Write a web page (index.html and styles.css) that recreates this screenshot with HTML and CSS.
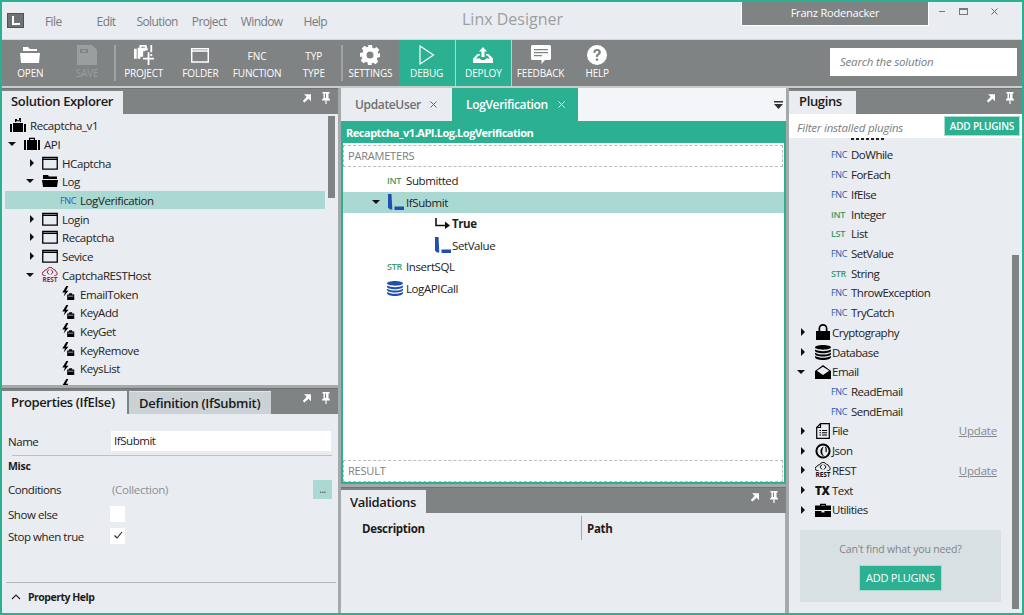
FILE: index.html
```html
<!DOCTYPE html>
<html lang="en">
<head>
<meta charset="utf-8">
<title>Linx Designer</title>
<link rel="stylesheet" href="styles.css">
</head>
<body>
<svg class="defs" width="0" height="0">
  <symbol id="i-popout" viewBox="0 0 10 10"><path d="M2 1.200h7v7L6.600 5.800 2.400 9.600.8 8l3.900-4.300z" fill="currentColor"/></symbol>
  <symbol id="i-pin" viewBox="0 0 10 12"><path d="M1.500 0h7v1.500H7.500v4.500l1.500 1.500v1H5.600V12H4.400V8.500H1v-1l1.500-1.500V1.500h-1zM4 1.500v4.500h1V1.500z" fill="currentColor"/></symbol>
  <symbol id="i-folder" viewBox="0 0 16 14"><path d="M.75 1.500h14.500v11.700H.75zM.75 3.400h14.500" fill="none" stroke="currentColor" stroke-width="1.300"/></symbol>
  <symbol id="i-folder-open" viewBox="0 0 16 14"><path d="M1 1h5l1 1.500h8V5H1zM0 6h16l-1 7H1z" fill="currentColor"/></symbol>
  <symbol id="i-case" viewBox="0 0 16 14"><path d="M5 3V.7h6V3h-1.200V1.900H6.200V3zM0 3h2v10H0zM3 3h10v10H3zM14 3h2v10h-2z" fill="currentColor"/></symbol>
  <symbol id="i-solution" viewBox="0 0 16 16"><path d="M5 5V3.200h6V5h-1.200V4.200H6.200V5zM0 7h2v8H0zM3 6h10v9H3zM14 7h2v8h-2z" fill="currentColor"/><path d="M5 2h2v2H5zM9 1h2v2H9z" fill="currentColor"/></symbol>
  <symbol id="i-event" viewBox="0 0 14 17"><path d="M4.500 0 0 7.500h3L1.500 12 7 5.500H4.200L6.800 0z" fill="currentColor"/><path d="M5.500 9.500h1.800l.6-1.300h3l.6 1.300h2v6.500h-8z" fill="currentColor"/><path d="M6.500 11.500h6" stroke="#e9ecf1" stroke-width=".8"/></symbol>
  <symbol id="i-if" viewBox="0 0 16 16"><path d="M0 0h3.500l.8 15.500H2L0 13.500z" fill="#1f4fb0"/><path d="M6.500 12.500H16V16H6.500z" fill="#1f4fb0"/></symbol>
  <symbol id="i-arrow" viewBox="0 0 15 12"><path d="M1 0v7.500h11" fill="none" stroke="currentColor" stroke-width="1.600"/><path d="M10 3.500 15 7.500 10 11z" fill="currentColor"/></symbol>
  <symbol id="i-db" viewBox="0 0 16 15"><path d="M0 2.300C0 1 3.500 0 8 0s8 1 8 2.300-3.500 2.400-8 2.400S0 3.600 0 2.300zM0 5.500v-.9c2 1.400 5 1.600 8 1.600s6-.2 8-1.600v.9c0 1.900-3.500 2.700-8 2.700S0 7.400 0 5.500zM0 8.800v-1c2 1.400 5 1.700 8 1.700s6-.3 8-1.700v1c0 1.900-3.500 2.700-8 2.700S0 10.700 0 8.800zM0 12v-1c2 1.400 5 1.700 8 1.700s6-.3 8-1.700v1c0 2-3.500 3-8 3s-8-1-8-3z" fill="currentColor"/></symbol>
  <symbol id="i-lock" viewBox="0 0 14 16"><path d="M0 7h14v9H0zM2.500 7V4.500a4.500 4.500 0 0 1 9 0V7H9.800V4.500a2.800 2.800 0 0 0-5.600 0V7z" fill="currentColor"/></symbol>
  <symbol id="i-mail" viewBox="0 0 16 14"><path d="M0 6 8 0l8 6v8H0zM1.800 5.800 8 10l6.200-4.200L8 1.800z" fill="currentColor"/></symbol>
  <symbol id="i-file" viewBox="0 0 14 16"><path d="M4.500.7h8.800v14.600H.7V4.500z M4.500.7v3.800H.7" fill="none" stroke="currentColor" stroke-width="1.200"/><path d="M3.500 7.500h1.500M6 7.500h5M3.500 9.800h1.500M6 9.800h5M3.500 12h1.500M6 12h5" stroke="currentColor" stroke-width="1.100"/></symbol>
  <symbol id="i-json" viewBox="0 0 16 16"><circle cx="8" cy="8" r="6.600" fill="none" stroke="currentColor" stroke-width="2"/><path d="M9 3.500C6 4.500 5 7 5.500 9.500s2.500 3.800 3.500 3.500C7.500 11.500 7 9.500 7.300 7.500 7.600 5.800 8 4.500 9 3.500z" fill="currentColor"/><path d="M10.500 4c1 1.500 1 3.500.5 5" stroke="currentColor" fill="none" stroke-width="1.200"/></symbol>
  <symbol id="i-tool" viewBox="0 0 16 14"><path d="M5 2.500V.8h6v1.700H9.800V2H6.200v.5zM0 2.500h16v4.500H0zM0 8h6.500v1.500h3V8H16v6H0z" fill="currentColor"/></symbol>
  <symbol id="i-cloud" viewBox="0 0 16 9"><path d="M3.500 8.500H2.400a2 2 0 0 1-.3-4 2.300 2.300 0 0 1 2.600-1.700A3.700 3.700 0 0 1 11.400 2.300a2.600 2.600 0 0 1 2.400 2.300 2 2 0 0 1-.4 3.900h-1" fill="none" stroke="currentColor" stroke-width="1"/><path d="M7 2.500 5 5l2 2.500M9 2.500 11 5 9 7.500" fill="none" stroke="currentColor" stroke-width="1"/></symbol>
  <symbol id="i-open-lg" viewBox="0 0 20 16"><path d="M3 0h5l2 2h7v2H3zM0 6h20l-1 10H1z" fill="currentColor"/></symbol>
  <symbol id="i-save-lg" viewBox="0 0 20 20"><path d="M0 0h15l5 5v15H0z" fill="currentColor"/><path d="M3 4h8v4H3z" fill="#7f8383"/><path d="M5 5h4v2H5z" fill="currentColor"/></symbol>
  <symbol id="i-project-lg" viewBox="0 0 22 22"><path d="M0 4h3v11H0zM4 3h2V0h8v3h1v3h-3V2H8v1h4v4h-2v6h-3v2H4zM18 0h2v8h-2zM18 10h2v2h-2z" fill="currentColor"/><path d="M15 8h2v6h5v2h-5v6h-2v-6h-5v-2h5z" fill="currentColor"/></symbol>
  <symbol id="i-gear" viewBox="0 0 20 20"><path fill="currentColor" fill-rule="evenodd" d="M8 0h4l.5 2.700 1.700.7 2.300-1.500 2.800 2.800-1.600 2.300.7 1.700L20 8v4l-2.600.5-.7 1.700 1.600 2.300-2.800 2.800-2.300-1.600-1.700.7L11.900 20H8l-.5-2.600-1.700-.7-2.300 1.600-2.800-2.800 1.600-2.300-.7-1.700L0 12V8l2.600-.5.700-1.700L1.700 3.500l2.800-2.800 2.300 1.600 1.700-.7zM10 6.500a3.500 3.500 0 1 0 0 7 3.500 3.500 0 0 0 0-7z"/></symbol>
  <symbol id="i-play" viewBox="0 0 16 20"><path d="M1 1l13.500 9L1 19z" fill="none" stroke="currentColor" stroke-width="1.200"/></symbol>
  <symbol id="i-deploy" viewBox="0 0 20 16"><path d="M10 0l4 4.500h-2.500V10h-3V4.500H6z" fill="currentColor"/><path d="M4.500 7H7v1.500H5.500L3 11.500h4L8 13h4l1-1.500h4L14.500 8.500H13V7h2.500L20 11.500V16H0v-4.500z" fill="currentColor"/></symbol>
  <symbol id="i-chat" viewBox="0 0 20 20"><path fill="currentColor" fill-rule="evenodd" d="M1.500 0h17A1.500 1.500 0 0 1 20 1.500v12a1.500 1.500 0 0 1-1.500 1.500H14l-3.500 4V15H1.500A1.500 1.500 0 0 1 0 13.500v-12A1.500 1.500 0 0 1 1.500 0zM3 4v1.200h14V4zM3 7v1.200h14V7zM3 10v1.200h8V10z"/></symbol>
  <symbol id="i-help" viewBox="0 0 20 20"><path fill="currentColor" fill-rule="evenodd" d="M10 0a10 10 0 1 1 0 20 10 10 0 0 1 0-20zM6.300 7.700h2.300c0-1 .5-1.600 1.400-1.600s1.400.5 1.400 1.200c0 .8-.5 1.200-1.300 1.800-1 .7-1.300 1.500-1.300 3h2.200c0-1 .2-1.300 1.100-2 1-.8 1.700-1.600 1.700-2.900 0-2-1.500-3.200-3.800-3.200-2.400 0-3.700 1.400-3.700 3.700zM8.800 13.400v2.400h2.400v-2.400z"/></symbol>
</svg>

<div class="app">
  <header class="titlebar">
    <div class="logo"><span class="logo-l"></span></div>
    <nav class="menu">
      <span class="m-file">File</span><span class="m-edit">Edit</span><span class="m-solution">Solution</span><span class="m-project">Project</span><span class="m-window">Window</span><span class="m-help">Help</span>
    </nav>
    <div class="app-title">Linx Designer</div>
    <div class="user">Franz Rodenacker</div>
    <div class="winctl">
      <span class="wc-min"></span><span class="wc-max"></span>
      <svg class="wc-close" width="7" height="7" viewBox="0 0 7 7"><path d="M.5.500l6 6M6.500.500l-6 6" stroke="#666" stroke-width="1"/></svg>
    </div>
  </header>

  <div class="toolbar">
    <button class="tb"><svg class="tb-ic tb-ic-open" width="20" height="16"><use href="#i-open-lg"/></svg><span>OPEN</span></button>
    <button class="tb tb-off tb-sep"><svg class="tb-ic" width="20" height="20"><use href="#i-save-lg"/></svg><span>SAVE</span></button>
    <button class="tb"><svg class="tb-ic" width="20" height="20"><use href="#i-project-lg"/></svg><span>PROJECT</span></button>
    <button class="tb"><svg class="tb-ic tb-ic-open" width="20" height="16"><use href="#i-folder"/></svg><span>FOLDER</span></button>
    <button class="tb"><b class="tb-code">FNC</b><span>FUNCTION</span></button>
    <button class="tb tb-sep"><b class="tb-code">TYP</b><span>TYPE</span></button>
    <button class="tb"><svg class="tb-ic" width="20" height="20"><use href="#i-gear"/></svg><span>SETTINGS</span></button>
    <button class="tb tb-on"><svg class="tb-ic" width="16" height="20"><use href="#i-play"/></svg><span>DEBUG</span></button>
    <button class="tb tb-on"><svg class="tb-ic tb-ic-open" width="20" height="16"><use href="#i-deploy"/></svg><span>DEPLOY</span></button>
    <button class="tb"><svg class="tb-ic" width="20" height="20"><use href="#i-chat"/></svg><span>FEEDBACK</span></button>
    <button class="tb"><svg class="tb-ic" width="20" height="20"><use href="#i-help"/></svg><span>HELP</span></button>
    <div class="search">Search the solution</div>
  </div>

  <main class="workspace">
    <section class="col col-left">
      <div class="panel panel-explorer">
        <div class="tabbar">
          <div class="ptab ptab-explorer">Solution Explorer</div>
          <div class="tabtools"><svg width="10" height="10"><use href="#i-popout"/></svg><svg width="10" height="12"><use href="#i-pin"/></svg></div>
        </div>
        <div class="tree-wrap">
          <div class="tree">
            <div class="row d0"><svg class="ic" width="16" height="16"><use href="#i-solution"/></svg><span>Recaptcha_v1</span></div>
            <div class="row d1"><i class="tw tw-down"></i><svg class="ic" width="16" height="14"><use href="#i-case"/></svg><span>API</span></div>
            <div class="row d2"><i class="tw tw-right"></i><svg class="ic" width="16" height="14"><use href="#i-folder"/></svg><span>HCaptcha</span></div>
            <div class="row d2"><i class="tw tw-down"></i><svg class="ic" width="16" height="14"><use href="#i-folder-open"/></svg><span>Log</span></div>
            <div class="row row-sel d3"><b class="tag tag-fnc">FNC</b><span>LogVerification</span></div>
            <div class="row d2"><i class="tw tw-right"></i><svg class="ic" width="16" height="14"><use href="#i-folder"/></svg><span>Login</span></div>
            <div class="row d2"><i class="tw tw-right"></i><svg class="ic" width="16" height="14"><use href="#i-folder"/></svg><span>Recaptcha</span></div>
            <div class="row d2"><i class="tw tw-right"></i><svg class="ic" width="16" height="14"><use href="#i-folder"/></svg><span>Sevice</span></div>
            <div class="row d2"><i class="tw tw-down"></i><span class="rest rest-red"><svg width="16" height="9"><use href="#i-cloud"/></svg><b>REST</b></span><span>CaptchaRESTHost</span></div>
            <div class="row d3e"><svg class="ic ic-ev" width="13" height="15"><use href="#i-event"/></svg><span>EmailToken</span></div>
            <div class="row d3e"><svg class="ic ic-ev" width="13" height="15"><use href="#i-event"/></svg><span>KeyAdd</span></div>
            <div class="row d3e"><svg class="ic ic-ev" width="13" height="15"><use href="#i-event"/></svg><span>KeyGet</span></div>
            <div class="row d3e"><svg class="ic ic-ev" width="13" height="15"><use href="#i-event"/></svg><span>KeyRemove</span></div>
            <div class="row d3e"><svg class="ic ic-ev" width="13" height="15"><use href="#i-event"/></svg><span>KeysList</span></div>
            <div class="row d3e"><svg class="ic ic-ev" width="13" height="15"><use href="#i-event"/></svg></div>
          </div>
          <div class="scroll scroll-left"><div class="thumb"></div></div>
        </div>
      </div>
      <div class="panel panel-props">
        <div class="tabbar">
          <div class="ptab ptab-props">Properties (IfElse)</div>
          <div class="ptab ptab-def">Definition (IfSubmit)</div>
          <div class="tabtools"><svg width="10" height="10"><use href="#i-popout"/></svg><svg width="10" height="12"><use href="#i-pin"/></svg></div>
        </div>
        <div class="props">
          <div class="prop prop-name"><label>Name</label><div class="field">IfSubmit</div></div>
          <div class="misc">Misc</div>
          <div class="prop prop-cond"><label>Conditions</label><div class="coll">(Collection)</div><div class="dots">...</div></div>
          <div class="prop prop-else"><label>Show else</label><div class="check"></div></div>
          <div class="prop prop-stop"><label>Stop when true</label><div class="check"><svg width="10" height="9" viewBox="0 0 10 9"><path d="M1.500 4.500l2.500 2.500 5-6" fill="none" stroke="#222" stroke-width="1.100"/></svg></div></div>
          <div class="prop-help"><svg width="10" height="6" viewBox="0 0 10 6"><path d="M1 5l4-4 4 4" fill="none" stroke="#222" stroke-width="1.100"/></svg><b>Property Help</b></div>
        </div>
      </div>
    </section>

    <section class="col col-center">
      <div class="doctabs">
        <div class="dtab dtab-idle">UpdateUser<svg width="7" height="7" viewBox="0 0 7 7"><path d="M.5.500l6 6M6.500.500l-6 6" stroke="#666" stroke-width="1"/></svg></div>
        <div class="dtab dtab-on">LogVerification<svg width="7" height="7" viewBox="0 0 7 7"><path d="M.5.500l6 6M6.500.500l-6 6" stroke="#fff" stroke-width="1"/></svg></div>
        <div class="dmenu"><svg width="9" height="8" viewBox="0 0 9 8"><path d="M0 0h9v1.500H0zM0 3h9L4.500 8z" fill="#333"/></svg></div>
      </div>
      <div class="editor">
        <div class="crumb">Recaptcha_v1.API.Log.LogVerification</div>
        <div class="canvas">
          <div class="dash">PARAMETERS</div>
          <div class="steps">
            <div class="step s1"><b class="tag tag-var">INT</b><span>Submitted</span></div>
            <div class="step step-sel"><i class="tw tw-down"></i><svg class="sic" width="16" height="16"><use href="#i-if"/></svg><span>IfSubmit</span></div>
            <div class="step s2"><svg class="sic" width="15" height="12"><use href="#i-arrow"/></svg><b class="strong">True</b></div>
            <div class="step s2"><svg class="sic" width="16" height="16"><use href="#i-if"/></svg><span>SetValue</span></div>
            <div class="step s1"><b class="tag tag-var">STR</b><span>InsertSQL</span></div>
            <div class="step s1"><svg class="sic sic-db" width="16" height="15"><use href="#i-db"/></svg><span>LogAPICall</span></div>
          </div>
          <div class="dash">RESULT</div>
        </div>
      </div>
      <div class="panel panel-valid">
        <div class="tabbar">
          <div class="ptab ptab-valid">Validations</div>
          <div class="tabtools"><svg width="10" height="10"><use href="#i-popout"/></svg><svg width="10" height="12"><use href="#i-pin"/></svg></div>
        </div>
        <div class="vtable">
          <div class="vh vh-desc">Description</div>
          <div class="vh vh-path">Path</div>
        </div>
      </div>
    </section>

    <section class="col col-right">
      <div class="panel panel-plugins">
        <div class="tabbar">
          <div class="ptab ptab-plugins">Plugins</div>
          <div class="tabtools"><svg width="10" height="10"><use href="#i-popout"/></svg><svg width="10" height="12"><use href="#i-pin"/></svg></div>
        </div>
        <div class="filter"><span class="filter-text">Filter installed plugins</span><div class="add add-top">ADD PLUGINS</div></div>
        <div class="plist-wrap">
          <div class="plist">
            <div class="peek"></div>
            <div class="pr pr-sub"><b class="tag tag-fnc">FNC</b><span>DoWhile</span></div>
            <div class="pr pr-sub"><b class="tag tag-fnc">FNC</b><span>ForEach</span></div>
            <div class="pr pr-sub"><b class="tag tag-fnc">FNC</b><span>IfElse</span></div>
            <div class="pr pr-sub"><b class="tag tag-var">INT</b><span>Integer</span></div>
            <div class="pr pr-sub"><b class="tag tag-var">LST</b><span>List</span></div>
            <div class="pr pr-sub"><b class="tag tag-fnc">FNC</b><span>SetValue</span></div>
            <div class="pr pr-sub"><b class="tag tag-var">STR</b><span>String</span></div>
            <div class="pr pr-sub"><b class="tag tag-fnc">FNC</b><span>ThrowException</span></div>
            <div class="pr pr-sub"><b class="tag tag-fnc">FNC</b><span>TryCatch</span></div>
            <div class="pr"><i class="tw tw-right"></i><svg class="pic" width="16" height="16"><use href="#i-lock"/></svg><span>Cryptography</span></div>
            <div class="pr"><i class="tw tw-right"></i><svg class="pic" width="16" height="15"><use href="#i-db"/></svg><span>Database</span></div>
            <div class="pr"><i class="tw tw-down"></i><svg class="pic" width="16" height="14"><use href="#i-mail"/></svg><span>Email</span></div>
            <div class="pr pr-sub"><b class="tag tag-fnc">FNC</b><span>ReadEmail</span></div>
            <div class="pr pr-sub"><b class="tag tag-fnc">FNC</b><span>SendEmail</span></div>
            <div class="pr"><i class="tw tw-right"></i><svg class="pic" width="16" height="16"><use href="#i-file"/></svg><span>File</span><a class="update">Update</a></div>
            <div class="pr"><i class="tw tw-right"></i><svg class="pic" width="16" height="16"><use href="#i-json"/></svg><span>Json</span></div>
            <div class="pr"><i class="tw tw-right"></i><span class="rest rest-blk"><svg width="16" height="9"><use href="#i-cloud"/></svg><b>REST</b></span><span>REST</span><a class="update">Update</a></div>
            <div class="pr"><i class="tw tw-right"></i><b class="tx">TX</b><span>Text</span></div>
            <div class="pr"><i class="tw tw-right"></i><svg class="pic" width="16" height="14"><use href="#i-tool"/></svg><span>Utilities</span></div>
            <div class="cta">
              <div class="cta-text">Can't find what you need?</div>
              <div class="add add-big">ADD PLUGINS</div>
            </div>
          </div>
          <div class="scroll scroll-right"><div class="thumb"></div></div>
        </div>
      </div>
    </section>
  </main>
</div>
</body>
</html>
```

FILE: styles.css
```css
* { box-sizing: border-box; }
html, body { margin: 0; padding: 0; }
body { width: 1024px; height: 615px; overflow: hidden; font-family: "Open Sans", "Noto Sans", sans-serif; font-size: 12px; color: #1c1c1c; }
.defs { position: absolute; }

.app { width: 1024px; height: 615px; border: 2px solid #2cb092; background: #a5a9aa; display: flex; flex-direction: column; overflow: hidden; }

/* title bar */
.titlebar { height: 37px; flex: none; background: #e9ecf1; display: flex; align-items: flex-start; }
.logo { width: 17px; height: 15px; margin: 11px 0 0 5px; background: #6e7272; border: 1px solid #4f5353; flex: none; padding: 2px 0 0 4px; }
.logo-l { display: block; width: 8px; height: 9px; border-left: 2px solid #fff; border-bottom: 2px solid #fff; }
.menu { width: 318px; flex: none; height: 37px; display: flex; color: #787b7d; font-size: 12px; letter-spacing: -.6px; padding-top: 11px; }
.menu span { flex: none; }
.m-file { margin-left: 21px; }
.m-edit { margin-left: 35px; }
.m-solution { margin-left: 21px; }
.m-project { margin-left: 14px; }
.m-window { margin-left: 14px; }
.m-help { margin-left: 21px; }
.app-title { margin-left: 120px; width: 279px; padding-top: 6px; font-size: 16px; color: #9c9fa2; font-weight: 400; flex: none; }
.user { width: 188px; height: 24px; background: #7f8383; border: 1px solid #fff; border-top: 0; color: #fff; font-size: 11px; letter-spacing: -.2px; text-align: center; line-height: 22px; flex: none; }
.winctl { flex: 1; display: flex; align-items: center; height: 18px; padding-left: 10px; }
.wc-min { width: 6px; height: 1px; background: #777; margin-right: 14px; }
.wc-max { width: 9px; height: 7px; border: 1px solid #777; border-top-width: 2px; margin-right: 23px; }

/* toolbar */
.toolbar { height: 49px; flex: none; background: #7f8383; border-top: 1px solid #d4d6d8; border-bottom: 2px solid #c9cbcd; display: flex; align-items: stretch; }
.tb { width: 56.7px; flex: none; border: 0; background: none; padding: 5px 0 0; color: #fff; font: inherit; display: flex; flex-direction: column; align-items: center; position: relative; }
.tb span { position: absolute; left: -6px; right: -6px; top: 26px; font-size: 10px; letter-spacing: -.15px; line-height: 14px; text-align: center; }
.tb-ic { display: block; }
.tb-ic-open { margin-top: 2px; }
.tb-code { font-size: 10px; font-weight: 400; line-height: 20px; margin-top: 1px; }
.tb-off { color: #9a9e9e; }
.tb-on { background: #2cb092; border-right: 1px solid #a6dcd0; }
.tb-sep::after { content: ""; position: absolute; right: -1px; top: 5px; bottom: 5px; width: 2px; background: #a2a5a6; }
.search { width: 187px; height: 28px; margin: 8px 5px 0 auto; background: #fff; color: #7a7d80; font-style: italic; font-size: 11.5px; line-height: 27px; padding-left: 10px; letter-spacing: -.2px; flex: none; }

/* workspace */
.workspace { flex: 1; min-height: 0; display: flex; gap: 3px; }
.col { display: flex; flex-direction: column; min-height: 0; }
.col-left { width: 336px; flex: none; gap: 3px; }
.col-center { width: 445px; flex: none; }
.col-right { flex: 1; min-width: 0; }
.panel { display: flex; flex-direction: column; background: #e9ecf1; min-height: 0; }
.panel-explorer { height: 297px; flex: none; }
.panel-props { flex: 1; }
.panel-valid { height: 126px; flex: none; margin-top: 3px; }
.panel-plugins { flex: 1; }

.tabbar { height: 26px; flex: none; background: #7f8383; display: flex; align-items: flex-end; border-top: 1px solid #6f7373; }
.ptab { height: 23px; background: #e9ecf1; font-size: 13px; font-weight: 600; line-height: 20px; padding: 0 9px; letter-spacing: -.35px; color: #1a1a1a; flex: none; }
.ptab-explorer { width: 121px; }
.ptab-props { width: 125px; line-height: 23px; }
.ptab-def { width: 142px; margin-left: 2px; background: #cbd2d6; border-top: 1px solid #e2e5e8; line-height: 22px; letter-spacing: -.28px; padding-left: 10px; }
.ptab-valid { width: 85px; line-height: 24px; }
.ptab-plugins { width: 67px; padding-left: 10px; }
.tabtools { margin-left: auto; align-self: flex-start; display: flex; gap: 9px; align-items: center; color: #fff; padding: 3px 7px 0 0; }

/* trees */
.tree-wrap { flex: 1; min-height: 0; display: flex; overflow: hidden; padding: 2px 3px 0 0; }
.tree { flex: 1; min-width: 0; overflow: hidden; padding-left: 3px; }
.row { height: 18.7px; display: flex; align-items: center; white-space: nowrap; font-size: 11.5px; letter-spacing: -.4px; color: #222; }
.row > span:last-child { padding-top: 1px; }
.ic { flex: none; color: #000; margin-right: 4px; }
.ic-ev { margin-right: 5px; }
.d0 { padding-left: 5px; }
.d1 { padding-left: 3px; }
.d1 .ic, .d2 .ic { margin-left: 4px; }
.d2 { padding-left: 25px; }
.d2 .tw-down { margin-left: -4px; }
.d3 { padding-left: 55px; }
.d3e { padding-left: 57px; }
.row-sel { background: #aad9d3; }
.tw { display: block; flex: none; width: 0; height: 0; }
.tw-right { border-left: 4px solid #111; border-top: 4px solid transparent; border-bottom: 4px solid transparent; margin-right: 4px; }
.tw-down { border-top: 4px solid #111; border-left: 4px solid transparent; border-right: 4px solid transparent; margin-right: 4px; }
.tag { flex: none; width: 18px; margin-right: 2px; font-size: 9px; text-align: left; letter-spacing: -.3px; }
.tag-fnc { color: #2a5cb5; font-weight: 400; }
.tag-var { color: #3d9b6c; font-weight: 600; }
.rest { flex: none; width: 16px; display: flex; flex-direction: column; align-items: center; line-height: 1; }
.rest svg { display: block; }
.rest b { font-size: 6.500px; font-weight: 700; line-height: 7px; letter-spacing: -.1px; }
.rest-red { color: #9c1c45; margin-left: 4px; margin-right: 4px; }
.rest-blk { color: #111; margin-right: 1px; }

.scroll { flex: none; width: 7px; }
.scroll-left { margin-left: 3px; }
.scroll-left .thumb { height: 82px; background: #7f8383; }
.scroll-right { margin: 0 3px 0 2px; padding-top: 117px; }
.scroll-right .thumb { height: 354px; background: #7f8383; }

/* props */
.props { flex: 1; display: flex; flex-direction: column; min-height: 0; padding-left: 6px; }
.prop { display: flex; align-items: center; font-size: 11.500px; letter-spacing: -.45px; flex: none; }
.prop label { width: 103px; flex: none; }
.prop-name { height: 20px; margin-top: 17px; padding-right: 7px; }
.field { flex: 1; height: 20px; background: #fff; line-height: 20px; padding-left: 3px; }
.misc { margin: 4px 6px 0 4px; padding-top: 3px; text-indent: -4px; border-top: 1px solid #bcc0c3; font-size: 10.500px; font-weight: 700; letter-spacing: -.3px; height: 20px; }
.prop-cond { height: 20px; margin-top: 4px; padding-right: 6px; }
.coll { flex: 1; color: #8b8f92; padding-left: 1px; letter-spacing: -.3px; }
.dots { width: 19px; height: 19px; background: #aad9d3; text-align: center; font-size: 10px; line-height: 18px; color: #444; }
.prop-else { height: 16px; margin-top: 7px; }
.prop-stop { height: 16px; margin-top: 6px; }
.check { width: 15px; height: 16px; margin-left: -1px; background: #fff; display: flex; align-items: center; justify-content: center; }
.check svg { margin-top: -2px; }
.prop-help { margin-top: auto; margin-left: -2px; margin-right: 2px; height: 31px; border-top: 1px solid #b5b9bc; display: flex; align-items: center; gap: 7px; padding: 0 0 2px 5px; font-size: 10.500px; letter-spacing: -.5px; }

/* center */
.doctabs { height: 33px; flex: none; background: #e9ecf1; display: flex; align-items: stretch; }
.dtab { display: flex; align-items: center; font-size: 12px; font-weight: 600; letter-spacing: -.35px; flex: none; }
.dtab-idle { width: 110px; color: #6c7073; padding-left: 14px; gap: 9px; margin-right: 1px; }
.dtab-on { width: 126px; background: #2cb092; color: #fff; padding-left: 14px; gap: 10px; }
.dmenu { flex: 1; display: flex; justify-content: flex-end; align-items: center; padding-right: 3px; background: #f3f5f8; }
.editor { height: 363px; flex: none; display: flex; flex-direction: column; background: #fff; border: 2px solid #2cb092; border-top: 0; }
.crumb { height: 22px; flex: none; background: #2cb092; color: #fff; font-size: 11px; font-weight: 700; line-height: 24px; letter-spacing: -.48px; margin: 0 -2px; padding-left: 5px; }
.canvas { flex: 1; min-height: 0; display: flex; flex-direction: column; background: #fff; padding-top: 2px; }
.dash { height: 22px; flex: none; border: 1px dashed #bcbcbc; color: #7b7e80; font-size: 11px; line-height: 20px; padding-left: 4px; letter-spacing: -.2px; margin-right: 1px; }
.steps { flex: 1; padding-top: 3px; }
.step { height: 21.5px; display: flex; align-items: center; font-size: 11.500px; letter-spacing: -.4px; color: #222; }
.s1 { padding-left: 44px; }
.s1 .tag { margin-right: 1px; }
.s2 { padding-left: 92px; }
.s2 .sic { margin-right: 1px; }
.step-sel { background: #aad9d3; padding-left: 29px; }
.step-sel .tw { margin-right: 8px; }
.step-sel .sic { margin-right: 2px; }
.sic { flex: none; margin-right: 3px; color: #111; }
.sic-db { color: #1f4fb0; }
.strong { font-weight: 700; margin-left: 1px; }
.vtable { flex: 1; display: flex; align-items: flex-start; padding-top: 3px; border-right: 1px solid #a5a9aa; }
.vh { height: 24px; line-height: 26px; font-weight: 700; font-size: 11.500px; letter-spacing: -.3px; flex: none; }
.vh-desc { width: 241px; padding-left: 21px; border-right: 1px solid #a5a9aa; }
.vh-path { padding-left: 5px; }

/* plugins */
.filter { height: 24px; flex: none; background: #fff; display: flex; align-items: center; justify-content: space-between; padding: 0 2px 0 8px; color: #7a7d80; font-size: 11.500px; font-style: italic; letter-spacing: -.2px; }
.filter-text { padding-top: 2px; }
.add { background: #2cb092; color: #fff; font-style: normal; font-weight: 600; text-align: center; border: 1px solid #a9dcd0; }
.add-top { width: 76px; height: 20px; line-height: 18px; font-size: 10px; letter-spacing: -.2px; }
.plist-wrap { flex: 1; min-height: 0; display: flex; overflow: hidden; }
.plist { flex: 1; min-width: 0; }
.peek { width: 35px; height: 2px; margin: 0 0 5px 62px; background: repeating-linear-gradient(90deg, #222 0 3px, transparent 3px 5px); }
.pr { height: 19.72px; display: flex; align-items: center; font-size: 11.500px; letter-spacing: -.5px; color: #222; padding-left: 12px; white-space: nowrap; }
.pr .tw { margin-right: 10px; }
.pr .tw-down { margin-left: -4px; }
.pr-sub { padding-left: 42px; }
.pic { flex: none; color: #000; margin-right: 1px; }
.update { margin-left: auto; margin-right: 13px; color: #85898c; text-decoration: underline; font-size: 11.500px; letter-spacing: -.2px; }
.tx { flex: none; width: 17px; font-size: 11.500px; font-weight: 800; letter-spacing: -.4px; color: #111; }
.cta { width: 201px; height: 72px; margin: 10px 0 0 11px; background: #d9e0e3; text-align: center; color: #808487; font-size: 10.500px; letter-spacing: -.15px; padding-top: 11px; }
.cta-text { line-height: 16px; }
.add-big { width: 83px; height: 26px; margin: 8px 0 0 59px; line-height: 24px; font-size: 11px; letter-spacing: -.25px; font-weight: 400; }
```
